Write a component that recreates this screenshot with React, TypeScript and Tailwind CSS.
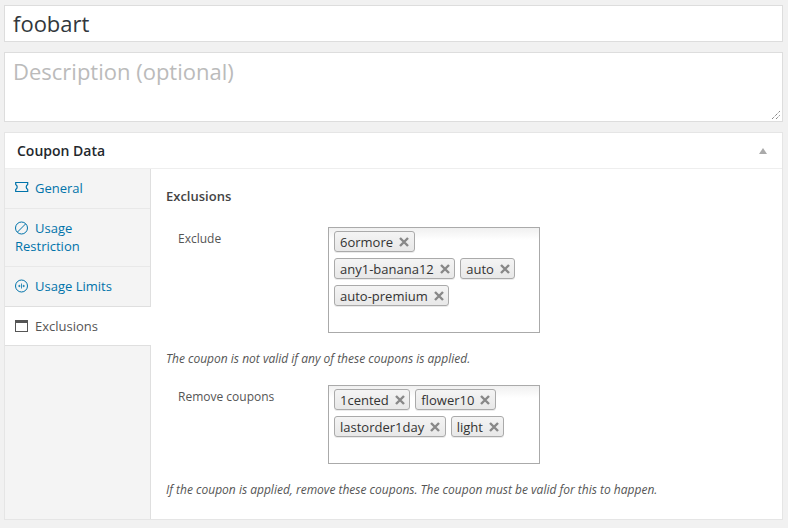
const font = { fontFamily: '"Open Sans", sans-serif' };

function Tag({ label }: { label: string }) {
  return (
    <span className="flex h-[21px] items-center rounded-[3px] border border-[#aaaaaa] bg-gradient-to-b from-[#f4f4f4] to-[#e8e8e8] pl-[5px] pr-[4.5px] pt-[1px] text-[13px] leading-none text-[#333333] shadow-[0_1px_0_rgba(0,0,0,0.08)]">
      {label}
      <svg width="10" height="10" viewBox="0 0 10 10" className="mb-[1px] ml-[6px]">
        <path d="M1 1l8 8M9 1l-8 8" stroke="#888888" strokeWidth="2.4" />
      </svg>
    </span>
  );
}

function TagBox({ rows, height }: { rows: string[][]; height: string }) {
  return (
    <div className={`flex w-[212px] flex-col gap-[6px] border border-[#aaaaaa] bg-gradient-to-b from-[#f0f0f0] to-white to-[12px] pl-[5px] pt-[3px] ${height}`}>
      {rows.map((row) => (
        <div key={row[0]} className="flex gap-[5px]">
          {row.map((t) => (
            <Tag key={t} label={t} />
          ))}
        </div>
      ))}
    </div>
  );
}

function SideTab({ icon, label, tone, className }: { icon: React.ReactNode; label: string; tone: string; className: string }) {
  return (
    <div className={`border-b px-[10px] text-[13px] leading-[18px] ${tone} ${className}`}>
      <svg width="14" height="14" viewBox="0 0 14 14" className="mr-[6px] inline-block align-[-2px]" fill="none" stroke="currentColor">
        {icon}
      </svg>
      {label}
    </div>
  );
}

const linkTab = "border-[#e8e8e8] text-[#0073aa]";

export default function App() {
  return (
    <div className="flex h-[528px] w-[788px] flex-col overflow-hidden bg-[#f1f1f1] pl-[4px] pr-[5px] pt-[5px]" style={font}>
      <div className="flex h-[37px] items-center border border-[#dddddd] bg-white pl-[8px] text-[22px] text-[#32373c]">foobart</div>
      <div className="relative mt-[10px] h-[70px] border border-[#dddddd] bg-white pl-[8px] text-[22px] leading-[36px] text-[#bbbbbb]">
        Description (optional)
        <svg width="10" height="10" viewBox="0 0 10 10" className="absolute bottom-[1px] right-[1px]" stroke="#555555" strokeWidth="1" strokeDasharray="1 1">
          <path d="M1 9l8-8M5 9l4-4" />
        </svg>
      </div>
      <div className="mt-[10px] flex h-[388px] flex-col border border-[#e5e5e5] bg-white">
        <div className="flex h-[36px] shrink-0 items-center justify-between border-b border-[#eeeeee] pl-[12px] pr-[15px] text-[14px] font-semibold text-[#23282d]">
          Coupon Data
          <svg width="8" height="6" viewBox="0 0 8 6"><path d="M4 0l4 6H0z" fill="#aaaaaa" /></svg>
        </div>
        <div className="flex min-h-0 flex-1">
          <div className="w-[146px] shrink-0 border-r border-[#dfdfdf] bg-[#f4f4f4]">
            <SideTab
              label="General"
              tone={linkTab}
              className="flex h-[40px] items-center pb-[2px]"
              icon={<path d="M.7 1.500h12v2c-1.200.8-1.500 1.500-1.500 2.500s.3 1.700 1.500 2.500v2H.7v-2C1.900 7.700 2.200 7 2.200 6S1.900 4.300.7 3.500z" strokeWidth="1.200" />}
            />
            <SideTab
              label="Usage Restriction"
              tone={linkTab}
              className="h-[58px] pt-[10px]"
              icon={<><circle cx="6.500" cy="7" r="6" /><path d="M2.500 11l8-8" /></>}
            />
            <SideTab
              label="Usage Limits"
              tone="border-[#dfdfdf] text-[#0073aa]"
              className="flex h-[40px] items-center pb-[2px]"
              icon={<><circle cx="6.500" cy="7" r="6" /><path d="M6.500 4.500v5M3 7h2M10 7H8M4 5.900L5.200 7 4 8.100M9 5.900L7.800 7 9 8.100" strokeWidth=".8" /></>}
            />
            <SideTab
              label="Exclusions"
              tone="mr-[-1px] border-[#dfdfdf] bg-white text-[#555555]"
              className="flex h-[39px] items-center"
              icon={<><rect x=".5" y="1.500" width="12" height="11" stroke="#555555" /><rect x="0" y="1" width="13" height="3" fill="#555555" stroke="none" /></>}
            />
          </div>
          <div className="min-w-0 flex-1 pl-[15px] pt-[17px] text-[#555555]">
            <h3 className="text-[13px] font-semibold leading-[20px] text-[#444444]">Exclusions</h3>
            <div className="mt-[21px] flex">
              <label className="w-[162px] shrink-0 pl-[12px] pt-[2px] text-[12px] leading-[20px]">Exclude</label>
              <TagBox height="h-[106px]" rows={[["6ormore"], ["any1-banana12", "auto"], ["auto-premium"]]} />
            </div>
            <p className="mt-[17px] text-[12px] italic leading-[18px]">The coupon is not valid if any of these coupons is applied.</p>
            <div className="mt-[17px] flex">
              <label className="w-[162px] shrink-0 pl-[12px] pt-[2px] text-[12px] leading-[20px]">Remove coupons</label>
              <TagBox height="h-[79px]" rows={[["1cented", "flower10"], ["lastorder1day", "light"]]} />
            </div>
            <p className="mt-[17px] text-[12px] italic leading-[18px]">If the coupon is applied, remove these coupons. The coupon must be valid for this to happen.</p>
          </div>
        </div>
      </div>
    </div>
  );
}
